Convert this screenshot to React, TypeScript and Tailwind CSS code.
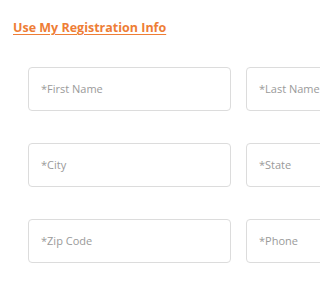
import React from "react";

const rows = [
  ["*First Name", "*Last Name"],
  ["*City", "*State"],
  ["*Zip Code", "*Phone"],
];

export default function App() {
  return (
    <div className="w-full h-screen overflow-hidden bg-white" style={{ fontFamily: '"Open Sans", sans-serif' }}>
      <div className="pt-[14px] pl-[13px]">
        <a href="#" className="text-[12.5px] font-bold text-[#ee7d35] underline underline-offset-2 leading-[18px]">
          Use My Registration Info
        </a>
      </div>
      <div className="pl-[28px] pt-[29px] flex flex-col gap-[32px]">
        {rows.map((r, i) => (
          <div key={i} className="flex gap-[15px] w-[500px]">
            {r.map((p) => (
              <div
                key={p}
                className="w-[203px] h-[44px] shrink-0 rounded-[4px] border border-[#dcdcdc] bg-white flex items-center pl-[12px] text-[11px] text-[#9a9a9a]"
              >
                {p}
              </div>
            ))}
          </div>
        ))}
      </div>
    </div>
  );
}
